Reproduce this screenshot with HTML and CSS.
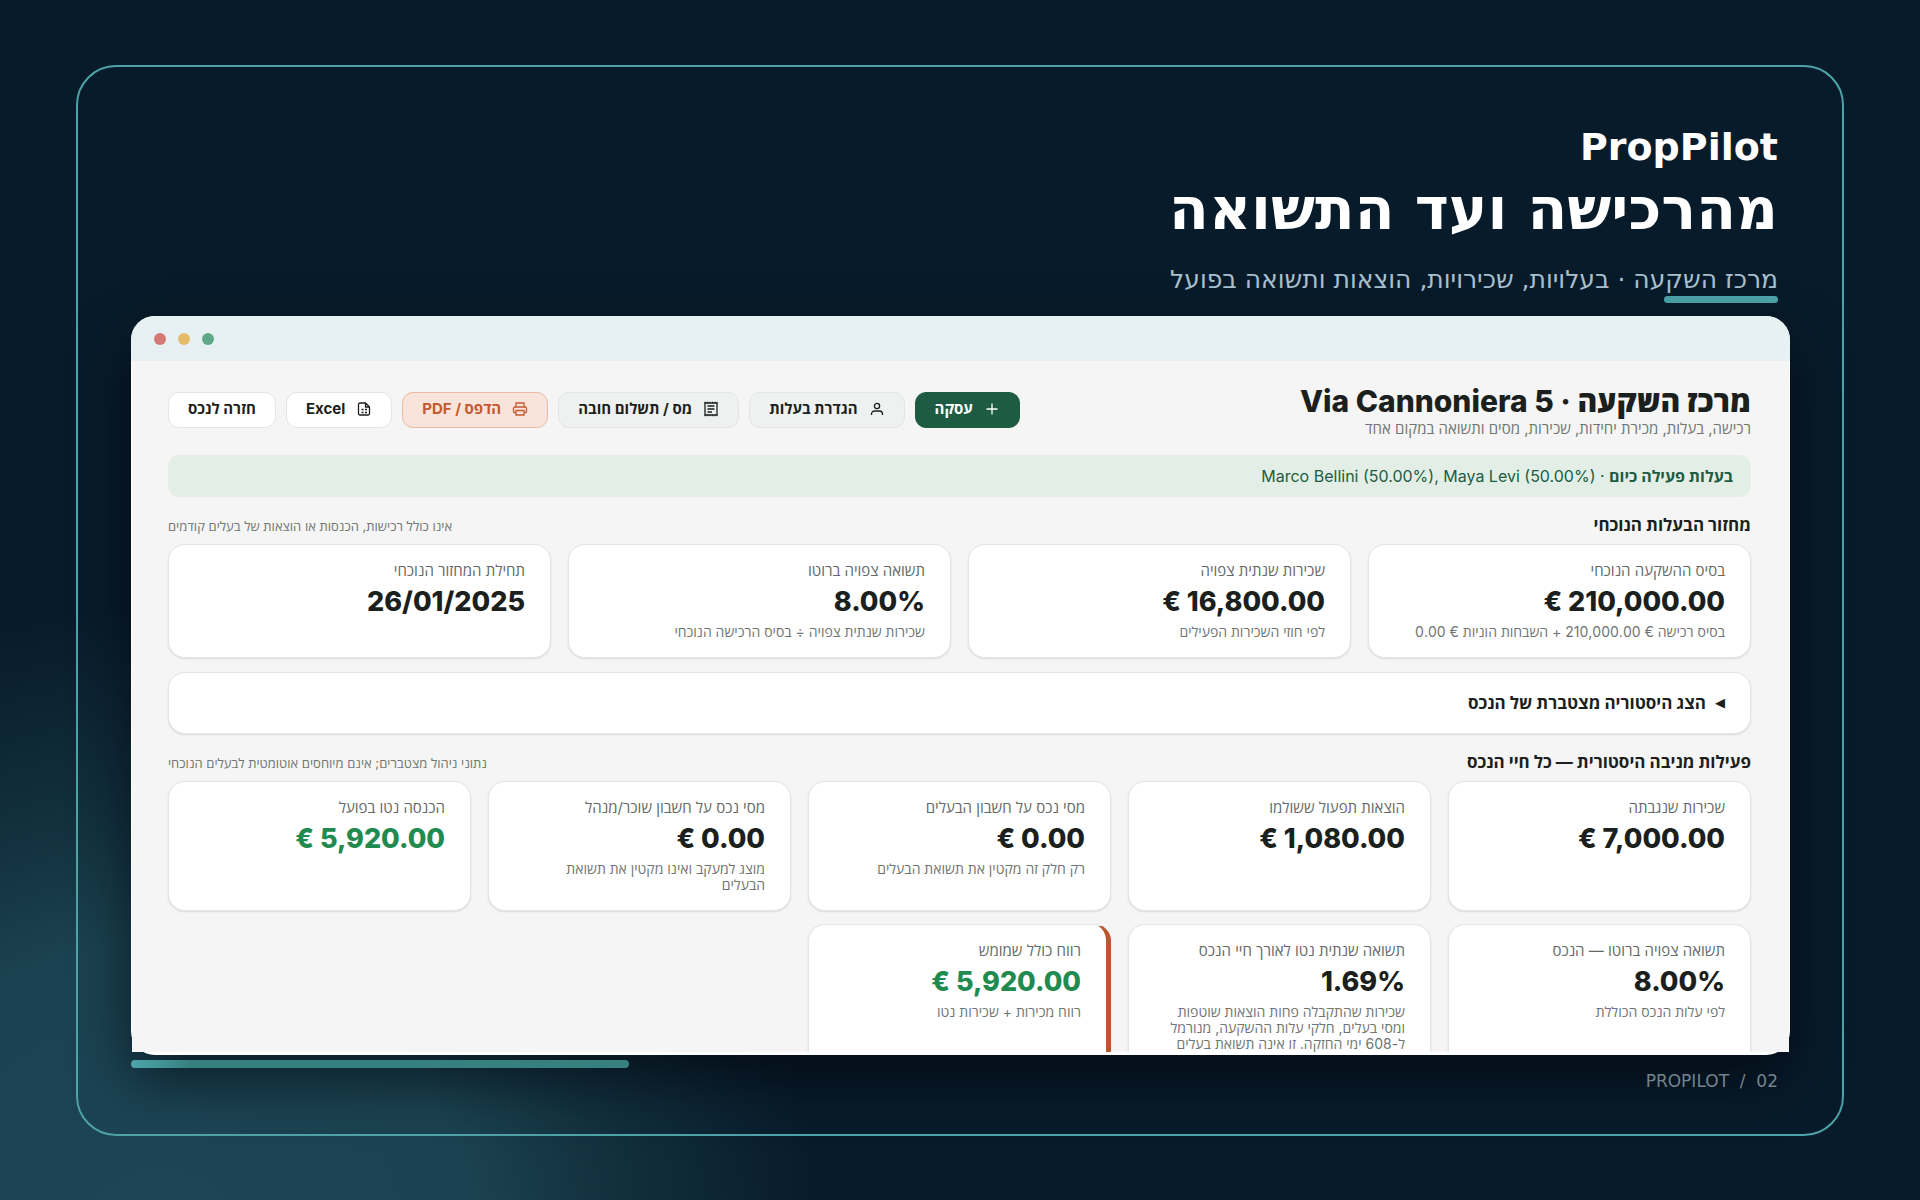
FILE: index.html
```html
<!DOCTYPE html>
<html lang="he" dir="rtl">
<head>
<meta charset="utf-8">
<meta name="viewport" content="width=device-width, initial-scale=1">
<title>PropPilot</title>
<link rel="stylesheet" href="styles.css">
</head>
<body>
<main class="frame">
  <header class="hero">
    <p class="brand">PropPilot</p>
    <h1 class="headline">מהרכישה ועד התשואה</h1>
    <p class="tagline">מרכז השקעה · בעלויות, שכירויות, הוצאות ותשואה בפועל</p>
    <span class="accent"></span>
  </header>

  <section class="window">
    <div class="titlebar"><i class="dot red"></i><i class="dot amber"></i><i class="dot green"></i></div>
    <div class="app">
      <div class="topline">
        <div>
          <h2 class="title">מרכז השקעה · Via Cannoniera 5</h2>
          <p class="subtitle">רכישה, בעלות, מכירת יחידות, שכירות, מסים ותשואה במקום אחד</p>
        </div>
        <div class="actions">
          <button class="btn primary" type="button"><svg class="icon" viewBox="0 0 16 16"><path d="M8 2.500v11M2.500 8h11"/></svg>עסקה</button>
          <button class="btn soft" type="button"><svg class="icon" viewBox="0 0 16 16"><circle cx="8" cy="5" r="2.600"/><path d="M2.500 14v-1a3 3 0 0 1 3-3h5a3 3 0 0 1 3 3v1"/></svg>הגדרת בעלות</button>
          <button class="btn soft" type="button"><svg class="icon" viewBox="0 0 16 16"><path d="M2 2h12v12H2zM4.500 5h7M4.500 8h7M4.500 11h4.500"/><path stroke-dasharray="1 1.500" d="M1.500 1.500h13M1.500 14.500h13"/></svg>מס / תשלום חובה</button>
          <button class="btn print" type="button"><svg class="icon" viewBox="0 0 16 16"><path d="M4 6V2h8v4M4 11.500H2.500a1 1 0 0 1-1-1V7.500A1.500 1.500 0 0 1 3 6h10a1.500 1.500 0 0 1 1.500 1.500v3a1 1 0 0 1-1 1H12M4 9.500h8V14H4z"/></svg>הדפס / PDF</button>
          <button class="btn" type="button"><svg class="icon" viewBox="0 0 16 16"><path d="M9.500 2H4A1.500 1.500 0 0 0 2.500 3.500v9A1.500 1.500 0 0 0 4 14h8a1.500 1.500 0 0 0 1.500-1.500V6zM9.500 2v4h4M5.500 8.500h2M9 8.500h2M5.500 11.500h2M9 11.500h2"/></svg>Excel</button>
          <button class="btn" type="button">חזרה לנכס</button>
        </div>
      </div>

      <p class="banner"><b>בעלות פעילה כיום</b> · <bdi dir="ltr">Marco Bellini (50.00%), Maya Levi (50.00%)</bdi></p>

      <div class="section-head">
        <h3 class="section-title">מחזור הבעלות הנוכחי</h3>
        <span class="hint">אינו כולל רכישות, הכנסות או הוצאות של בעלים קודמים</span>
      </div>
      <div class="cards four">
        <article class="card"><p class="label">בסיס ההשקעה הנוכחי</p><p class="value"><bdi dir="ltr">€ 210,000.00</bdi></p><p class="note">בסיס רכישה € 210,000.00 + השבחות הוניות € 0.00</p></article>
        <article class="card"><p class="label">שכירות שנתית צפויה</p><p class="value"><bdi dir="ltr">€ 16,800.00</bdi></p><p class="note">לפי חוזי השכירות הפעילים</p></article>
        <article class="card"><p class="label">תשואה צפויה ברוטו</p><p class="value">8.00%</p><p class="note">שכירות שנתית צפויה ÷ בסיס הרכישה הנוכחי</p></article>
        <article class="card"><p class="label">תחילת המחזור הנוכחי</p><p class="value">26/01/2025</p></article>
      </div>

      <details class="history">
        <summary class="summary"><span class="marker">◀</span>הצג היסטוריה מצטברת של הנכס</summary>
      </details>

      <div class="section-head">
        <h3 class="section-title">פעילות מניבה היסטורית — כל חיי הנכס</h3>
        <span class="hint">נתוני ניהול מצטברים; אינם מיוחסים אוטומטית לבעלים הנוכחי</span>
      </div>
      <div class="cards five">
        <article class="card"><p class="label">שכירות שנגבתה</p><p class="value"><bdi dir="ltr">€ 7,000.00</bdi></p></article>
        <article class="card"><p class="label">הוצאות תפעול ששולמו</p><p class="value"><bdi dir="ltr">€ 1,080.00</bdi></p></article>
        <article class="card"><p class="label">מסי נכס על חשבון הבעלים</p><p class="value"><bdi dir="ltr">€ 0.00</bdi></p><p class="note">רק חלק זה מקטין את תשואת הבעלים</p></article>
        <article class="card"><p class="label">מסי נכס על חשבון שוכר/מנהל</p><p class="value"><bdi dir="ltr">€ 0.00</bdi></p><p class="note">מוצג למעקב ואינו מקטין את תשואת<br>הבעלים</p></article>
        <article class="card"><p class="label">הכנסה נטו בפועל</p><p class="value gain"><bdi dir="ltr">€ 5,920.00</bdi></p></article>
        <article class="card"><p class="label">תשואה צפויה ברוטו — הנכס</p><p class="value">8.00%</p><p class="note">לפי עלות הנכס הכוללת</p></article>
        <article class="card"><p class="label">תשואה שנתית נטו לאורך חיי הנכס</p><p class="value">1.69%</p><p class="note">שכירות שהתקבלה פחות הוצאות שוטפות<br>ומסי בעלים, חלקי עלות ההשקעה, מנורמל<br>ל-608 ימי החזקה. זו אינה תשואת בעלים</p></article>
        <article class="card marked"><p class="label">רווח כולל שמומש</p><p class="value gain"><bdi dir="ltr">€ 5,920.00</bdi></p><p class="note">רווח מכירות + שכירות נטו</p></article>
      </div>
    </div>
  </section>

  <footer class="footer">
    <span class="page" dir="ltr">PROPILOT  /  02</span>
    <span class="progress"></span>
  </footer>
</main>
</body>
</html>
```
FILE: styles.css
```css
* { box-sizing: border-box; }

body {
  margin: 0;
  height: 100vh;
  padding: 65px 76px 64px;
  display: flex;
  background:
    radial-gradient(ellipse 660px 640px at 160px 1250px, #1c4556 0%, #1b4250 48%, rgba(21, 54, 68, 0.8) 68%, rgba(8, 27, 42, 0) 100%),
    #081b2a;
  color: #1b1f1d;
  font-family: Inter, "Open Sans", "DejaVu Sans", sans-serif;
}

p, h1, h2, h3 { margin: 0; }

.frame {
  flex: 1;
  min-width: 0;
  display: flex;
  flex-direction: column;
  padding: 56px 52px 42px 53px;
  border: 2px solid #4fa3a8;
  border-radius: 40px;
}

/* Heading block */
.hero {
  display: flex;
  flex-direction: column;
  align-items: flex-start;
  padding: 0 12px;
  font-family: "DejaVu Sans", sans-serif;
}
.brand { color: #fff; font-size: 38px; line-height: 48px; font-weight: 700; }
.headline { color: #fff; font-size: 58px; line-height: 76px; font-weight: 700; }
.tagline { margin-top: 17px; color: #a9c0cf; font-size: 25px; line-height: 32px; }
.accent { width: 114px; height: 7px; border-radius: 4px; background: #4ba5aa; }

/* Browser window */
.window {
  flex: 1;
  min-height: 0;
  margin-top: 13px;
  display: flex;
  flex-direction: column;
  padding-bottom: 3px;
  border-radius: 24px;
  background: #fff;
  box-shadow: 0 24px 56px rgba(0, 4, 12, 0.6);
}
.titlebar {
  flex: none;
  direction: ltr;
  display: flex;
  align-items: center;
  gap: 12px;
  height: 45px;
  padding: 0 23px;
  border-radius: 24px 24px 0 0;
  background: #e7f0f3;
}
.dot { width: 12px; height: 12px; border-radius: 50%; }
.red { background: #d67873; }
.amber { background: #e4bb68; }
.green { background: #5eaa88; }

.app {
  flex: 1;
  min-height: 0;
  margin: 0 1px;
  padding: 23px 38px 0 36px;
  overflow: hidden;
  background: #f5f5f5;
}

.topline { display: flex; justify-content: space-between; align-items: flex-start; }
.title { font-size: 30px; line-height: 34px; font-weight: 800; }
.subtitle { color: #6f7573; font-size: 15px; line-height: 22px; }
.actions { display: flex; gap: 10px; padding-top: 8px; }
.btn {
  display: flex;
  align-items: center;
  gap: 11px;
  height: 36px;
  padding: 0 19px 2px;
  border: 1px solid #e3e6e5;
  border-radius: 11px;
  background: #fff;
  color: #1b1f1d;
  font: 700 15px/18px Inter, "Open Sans", "DejaVu Sans", sans-serif;
  white-space: nowrap;
}
.soft { background: #eef1ef; border-color: #e1e6e3; }
.print { background: #f8e4da; border-color: #ecb9a2; color: #c35a31; }
.primary { background: #1d5c42; border-color: #1d5c42; color: #fff; }
.icon { width: 16px; height: 16px; fill: none; stroke: currentColor; stroke-width: 1.3; }

.banner {
  margin-top: 15px;
  padding: 10px 18px;
  border-radius: 11px;
  background: #e3efe6;
  color: #1d5c42;
  font-size: 16px;
  line-height: 22px;
}

.section-head {
  display: flex;
  justify-content: space-between;
  align-items: center;
  margin-top: 18px;
  margin-bottom: 8px;
}
.section-title { font-size: 17px; line-height: 21px; font-weight: 700; }
.hint { color: #6f7573; font-size: 13px; line-height: 20px; }

.cards { display: grid; gap: 13px 17px; }
.four { grid-template-columns: repeat(4, minmax(0, 1fr)); }
.five { grid-template-columns: repeat(5, minmax(0, 1fr)); }
.card {
  padding: 17px 25px;
  border: 1px solid #e3e6e5;
  border-radius: 17px;
  background: #fff;
  box-shadow: 0 1px 2px rgba(20, 30, 25, 0.12);
}
.marked { border-right: 5px solid #b9572f; }
.label { color: #636967; font-size: 15px; line-height: 18px; }
.value { margin-top: 6px; font-size: 27px; line-height: 32px; font-weight: 800; }
.gain { color: #208a4f; }
.note { margin-top: 6px; color: #6f7573; font-size: 14px; line-height: 16px; white-space: nowrap; }

.history {
  margin-top: 14px;
  border: 1px solid #e3e6e5;
  border-radius: 17px;
  background: #fff;
  box-shadow: 0 1px 2px rgba(20, 30, 25, 0.12);
}
.summary {
  display: flex;
  align-items: center;
  gap: 9px;
  padding: 20px 25px;
  font-size: 17px;
  line-height: 20px;
  font-weight: 700;
  list-style: none;
}
.marker { font-family: "DejaVu Sans", sans-serif; font-size: 13px; font-weight: 400; }

/* Footer */
.footer { display: flex; justify-content: space-between; align-items: flex-start; padding-top: 5px; }
.page {
  padding: 10px 12px 0;
  color: #71838f;
  font: 17px/22px "DejaVu Sans", sans-serif;
  white-space: pre;
}
.progress {
  width: 30%;
  height: 8px;
  border-radius: 4px;
  background: linear-gradient(90deg, #4ba5aa, #378080 12%);
}
```
